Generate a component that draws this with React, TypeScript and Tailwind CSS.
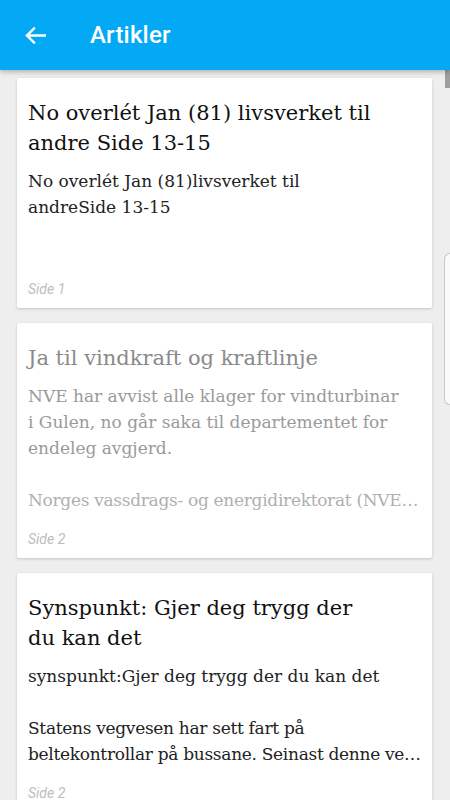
const articles = [
  {
    title: ["No overlét Jan (81) livsverket til", "andre Side 13-15"],
    body: ["No overlét Jan (81)livsverket til", "andreSide 13-15"],
    extra: [] as string[],
    page: "Side 1",
    read: false,
    tall: true,
  },
  {
    title: ["Ja til vindkraft og kraftlinje"],
    body: ["NVE har avvist alle klager for vindturbinar", "i Gulen, no går saka til departementet for", "endeleg avgjerd."],
    extra: ["Norges vassdrags- og energidirektorat (NVE…"],
    page: "Side 2",
    read: true,
    tall: false,
  },
  {
    title: ["Synspunkt: Gjer deg trygg der", "du kan det"],
    body: ["synspunkt:Gjer deg trygg der du kan det"],
    extra: ["Statens vegvesen har sett fart på", "beltekontrollar på bussane. Seinast denne ve…"],
    page: "Side 2",
    read: false,
    tall: false,
  },
];

const ArticleCard = ({ a }: { a: (typeof articles)[number] }) => (
  <div className="bg-white rounded-[2px] shadow-[0_1px_3px_rgba(0,0,0,0.18)] pl-[11px] pr-[4px] pt-[20px] pb-[9px]">
    <h2
      className={`font-['DejaVu_Serif',serif] text-[21px] leading-[30px] ${a.read ? "text-[#8a8a8a]" : "text-[#111]"}`}
    >
      {a.title.map((t) => (
        <span key={t} className="block whitespace-nowrap">{t}</span>
      ))}
    </h2>
    <div
      className={`mt-[10px] font-['DejaVu_Serif',serif] text-[17px] leading-[26px] ${a.read ? "text-[#9a9a9a]" : "text-[#222]"} ${a.tall ? "min-h-[95px]" : ""}`}
    >
      {a.body.map((b) => (
        <span key={b} className="block whitespace-nowrap">{b}</span>
      ))}
      {a.extra.length > 0 && (
        <p className={`mt-[26px] tracking-[-0.3px] ${a.read ? "text-[#b0b0b0]" : ""}`}>
          {a.extra.map((e) => (
            <span key={e} className="block whitespace-nowrap">{e}</span>
          ))}
        </p>
      )}
    </div>
    <div className="mt-[16px] font-['Roboto',sans-serif] italic text-[14px] leading-[20px] text-[#bdbdbd]">
      {a.page}
    </div>
  </div>
);

export default function App() {
  return (
    <div className="relative h-[800px] w-[450px] overflow-hidden bg-[#eeeeee]">
      <header className="relative z-10 h-[70px] bg-[#03a9f4] flex items-center shadow-[0_2px_5px_rgba(0,0,0,0.25)]">
        <svg className="ml-[25px]" width="21" height="17" viewBox="0 0 21 17" fill="none">
          <path d="M20 8.5H2M9 1.5 2 8.5l7 7" stroke="white" strokeWidth="2.4" strokeLinecap="square" />
        </svg>
        <h1 className="ml-[44px] font-['Roboto',sans-serif] font-medium text-[24px] text-white tracking-[0.2px]">
          Artikler
        </h1>
      </header>
      <main className="flex flex-col gap-[15px] pl-[17px] pr-[18px] pt-[8px]">
        {articles.map((a, i) => (
          <ArticleCard key={i} a={a} />
        ))}
      </main>
      <div className="absolute right-0 top-[70px] h-[18px] w-[5px] bg-[#9e9e9e]" />
      <div className="absolute right-0 top-[253px] h-[152px] w-[6px] rounded-l-[6px] border border-r-0 border-[#c8c8c8] bg-[#fafafa]" />
    </div>
  );
}
